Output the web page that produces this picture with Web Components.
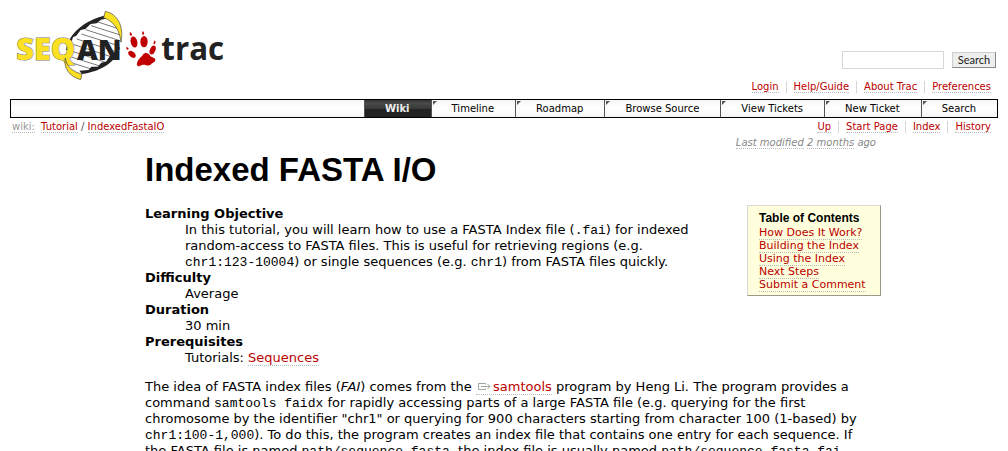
<!DOCTYPE html>
<html lang="en">
<head>
<meta charset="utf-8">
<title>Indexed FASTA I/O</title>
<style>
  body { margin: 0; background: #fff; color: #000; font: 13px/16px Verdana, "DejaVu Sans", sans-serif; height: 100vh; overflow: hidden; }
</style>
</head>
<body>
<trac-page></trac-page>
<script>
const define = (name, html) => {
  const template = document.createElement('template');
  template.innerHTML = html;
  customElements.define(name, class extends HTMLElement {
    constructor() {
      super();
      this.attachShadow({ mode: 'open' }).append(template.content.cloneNode(true));
    }
  });
};
const link = `a { color: #b00; text-decoration: none; border-bottom: 1px dotted #bbb; }`;

define('site-logo', `
<style>:host { display: block; } svg { display: block; }
.word { font: 800 92px "Open Sans", sans-serif; paint-order: stroke; }
.dark { font-size: 86px; }
.trac { font: bold 94px "Open Sans", sans-serif; fill: #222; }</style>
<svg width="240" height="90" viewBox="0 0 720 270" role="img" aria-label="SeqAn trac">
  <path d="M198 184C201 118 252 65 328 50L361 116C359 158 320 208 241 220Z" fill="#fff"/>
  <g stroke="#333" stroke-width="2">
    <path d="M291 65l73 24M273 77l88 28M257 89l103 33M244 102l114 36M230 117l122 39M219 133l126 41M208 151l118 39M201 167l108 34M204 185l82 26"/>
  </g>
  <path d="M198 151C205 104 248 62 320 45L326 54L303 59L290 70L272 72L256 87L242 90L229 107L219 112L207 149Z" fill="#222"/>
  <path d="M360 140C354 179 310 213 246 222L238 212L266 210L274 200L293 200L304 188L318 185L332 165Z" fill="#222"/>
  <path d="M316 34C353 43 372 77 363 127C359 94 346 66 311 53Z" fill="#fbe122" stroke="#444" stroke-width="2"/>
  <text class="word" x="49" y="180" fill="#fbe122" stroke="#777" stroke-width="3">SEQ</text>
  <path d="M196 174C200 201 216 213 246 223L242 239C207 230 190 202 196 174Z" fill="#fbe122" stroke="#444" stroke-width="2"/>
  <text class="word dark" x="231" y="180" fill="#222">AN</text>
  <g fill="#c00000">
    <path d="M411 190C413 177 424 172 431 161C439 156 448 161 451 168C457 174 466 172 466 179C466 188 456 187 451 195C441 200 432 188 420 198C413 200 409 196 411 190Z"/>
    <ellipse cx="402" cy="126" rx="10" ry="17" transform="rotate(-14 402 126)"/>
    <ellipse cx="432" cy="125" rx="11" ry="17"/>
    <ellipse cx="396" cy="163" rx="8" ry="13" transform="rotate(-48 396 163)"/>
    <ellipse cx="458" cy="150" rx="8" ry="14" transform="rotate(25 458 150)"/>
    <path d="M390 95l6 7l-2 6l-5-3zM428 93l4 4l-1 8l-5-2zM463 121l4 4l-2 8l-5-2zM380 140l6 5l-2 5l-5-3z"/>
  </g>
  <text class="trac" x="484" y="180">trac</text>
</svg>`);

define('search-box', `
<style>:host { display: block; }
form { display: flex; gap: 8px; align-items: center; margin: 0; }
input { box-sizing: border-box; width: 102px; height: 18px; margin: 0; border: 1px solid #d7d7d7; background: #fff; padding: 0 2px; font: 11px Verdana, "DejaVu Sans", sans-serif; }
button { box-sizing: border-box; width: 44px; height: 16px; padding: 0; border: 1px solid; border-color: #ccc #888 #888 #ccc; background: #eee; color: #222; font: 11px/12px Lato, sans-serif; }</style>
<form role="search"><input type="text" aria-label="Search site"><button type="button">Search</button></form>`);

define('link-bar', `
<style>:host { display: block; }
ul { display: flex; justify-content: flex-end; list-style: none; margin: 0; padding: 0; font-size: 10px; line-height: 12px; }
::slotted(li) { display: block; padding: 0 7px; border-left: 1px solid #d7d7d7; }
::slotted(li:first-child) { border-left: 0; }
::slotted(li:last-child) { padding-right: 0; }</style>
<ul><slot></slot></ul>`);

define('nav-tab', `
<style>:host { display: block; border-left: 1px solid #555; position: relative; }
a { display: block; padding: 0 21px 0 20px; color: #000; text-decoration: none; font-size: 10px; line-height: 17px; }
a::before { content: ""; position: absolute; left: 1px; top: 1px; border-top: 4px solid #555; border-right: 4px solid transparent; }
:host([active]) { background: linear-gradient(#333 0%, #484a47 20%, #383a37 50%, #222 55%, #222 100%); }
:host([active]) a { color: #eee; font-weight: bold; }
:host([active]) a::before { display: none; }</style>
<a href="#"><slot></slot></a>`);

define('main-nav', `
<style>:host { display: flex; justify-content: flex-end; border: 1px solid #000; background: linear-gradient(#f6f6f6, #fff 50%, #f4f4f4); }</style>
<slot></slot>`);

define('toc-box', `
<style>${link}
:host { display: block; box-sizing: border-box; width: 134px; border: 1px solid; border-color: #d7d7d7 #999988 #999988 #d7d7d7; background: #ffffdd; padding: 6px 11px 4px; font-size: 11px; line-height: 13px; }
h2 { margin: 0; font: bold 12px/13px "Liberation Sans", Arial, sans-serif; }
ol { margin: 1px 0 0; padding: 0; list-style: none; white-space: nowrap; }
a { line-height: 12px; }</style>
<h2>Table of Contents</h2>
<ol><li><a href="#">How Does It Work?</a></li><li><a href="#">Building the Index</a></li><li><a href="#">Using the Index</a></li><li><a href="#">Next Steps</a></li><li><a href="#">Submit a Comment</a></li></ol>`);

define('wiki-article', `
<style>${link}
:host { display: block; margin: 0 127px 0 145px; }
h1 { margin: 0 0 14px; font: bold 33px/42px "Liberation Sans", Arial, sans-serif; }
.modified { margin: 0; text-align: right; padding-right: 5px; font-size: 10px; line-height: 13px; color: #888; font-style: italic; }
.modified a { color: #888; }
toc-box { float: right; margin: 0 0 16px 16px; }
dl { margin: 0; padding-top: 1px; white-space: nowrap; }
dt { font-weight: bold; }
dd { margin: 0 0 0 40px; }
p.body { margin: 13px 0 0; white-space: nowrap; }
code { font: 13px/15px "Liberation Mono", monospace; }
svg { margin-right: 2px; }</style>
<p class="modified"><a href="#">Last modified</a> <a href="#">2 months</a> ago</p>
<h1>Indexed FASTA I/O</h1>
<toc-box></toc-box>
<dl>
<dt>Learning Objective</dt><dd>In this tutorial, you will learn how to use a FASTA Index file (<code>.fai</code>) for indexed<br>random-access to FASTA files. This is useful for retrieving regions (e.g.<br><code>chr1:123-10004</code>) or single sequences (e.g. <code>chr1</code>) from FASTA files quickly.</dd>
<dt>Difficulty</dt><dd>Average</dd>
<dt>Duration</dt><dd>30 min</dd>
<dt>Prerequisites</dt><dd>Tutorials: <a href="#">Sequences</a></dd>
</dl>
<p class="body">The idea of FASTA index files (<em>FAI</em>) comes from the <a href="#"><svg width="15" height="8" viewBox="0 0 15 8" fill="none" stroke="#9aaa9a"><path d="M9.500 1.500V.5h-7v6h7v-1M5 3.500h9M11.500 1l2.500 2.500l-2.500 2.500"/></svg>samtools</a> program by Heng Li. The program provides a<br>command <code>samtools faidx</code> for rapidly accessing parts of a large FASTA file (e.g. querying for the first<br>chromosome by the identifier "chr1" or querying for 900 characters starting from character 100 (1-based) by<br><code>chr1:100-1,000</code>). To do this, the program creates an index file that contains one entry for each sequence. If<br>the FASTA file is named <code>path/sequence.fasta</code>, the index file is usually named <code>path/sequence.fasta.fai</code>.</p>`);

define('trac-page', `
<style>${link}
:host { display: block; }
header { display: flex; justify-content: space-between; height: 99px; box-sizing: border-box; }
.tools { display: flex; flex-direction: column; align-items: flex-end; padding: 51px 12px 0 0; gap: 12px; }
.tools link-bar { padding-right: 5px; }
main-nav { margin: 0 10px; }
.context { display: flex; justify-content: space-between; padding: 3px 17px 3px 12px; }
.path { font-size: 10px; line-height: 12px; color: #555; }
.path .root { color: #999; margin-right: 3px; }</style>
<header>
  <site-logo></site-logo>
  <div class="tools">
    <search-box></search-box>
    <link-bar><li><a href="#">Login</a></li><li><a href="#">Help/Guide</a></li><li><a href="#">About Trac</a></li><li><a href="#">Preferences</a></li></link-bar>
  </div>
</header>
<main-nav><nav-tab active>Wiki</nav-tab><nav-tab>Timeline</nav-tab><nav-tab>Roadmap</nav-tab><nav-tab>Browse Source</nav-tab><nav-tab>View Tickets</nav-tab><nav-tab>New Ticket</nav-tab><nav-tab>Search</nav-tab></main-nav>
<div class="context">
  <div class="path"><a class="root" href="#">wiki:</a> <a href="#">Tutorial</a> / <a href="#">IndexedFastaIO</a></div>
  <link-bar><li><a href="#">Up</a></li><li><a href="#">Start Page</a></li><li><a href="#">Index</a></li><li><a href="#">History</a></li></link-bar>
</div>
<wiki-article></wiki-article>`);
</script>
</body>
</html>
